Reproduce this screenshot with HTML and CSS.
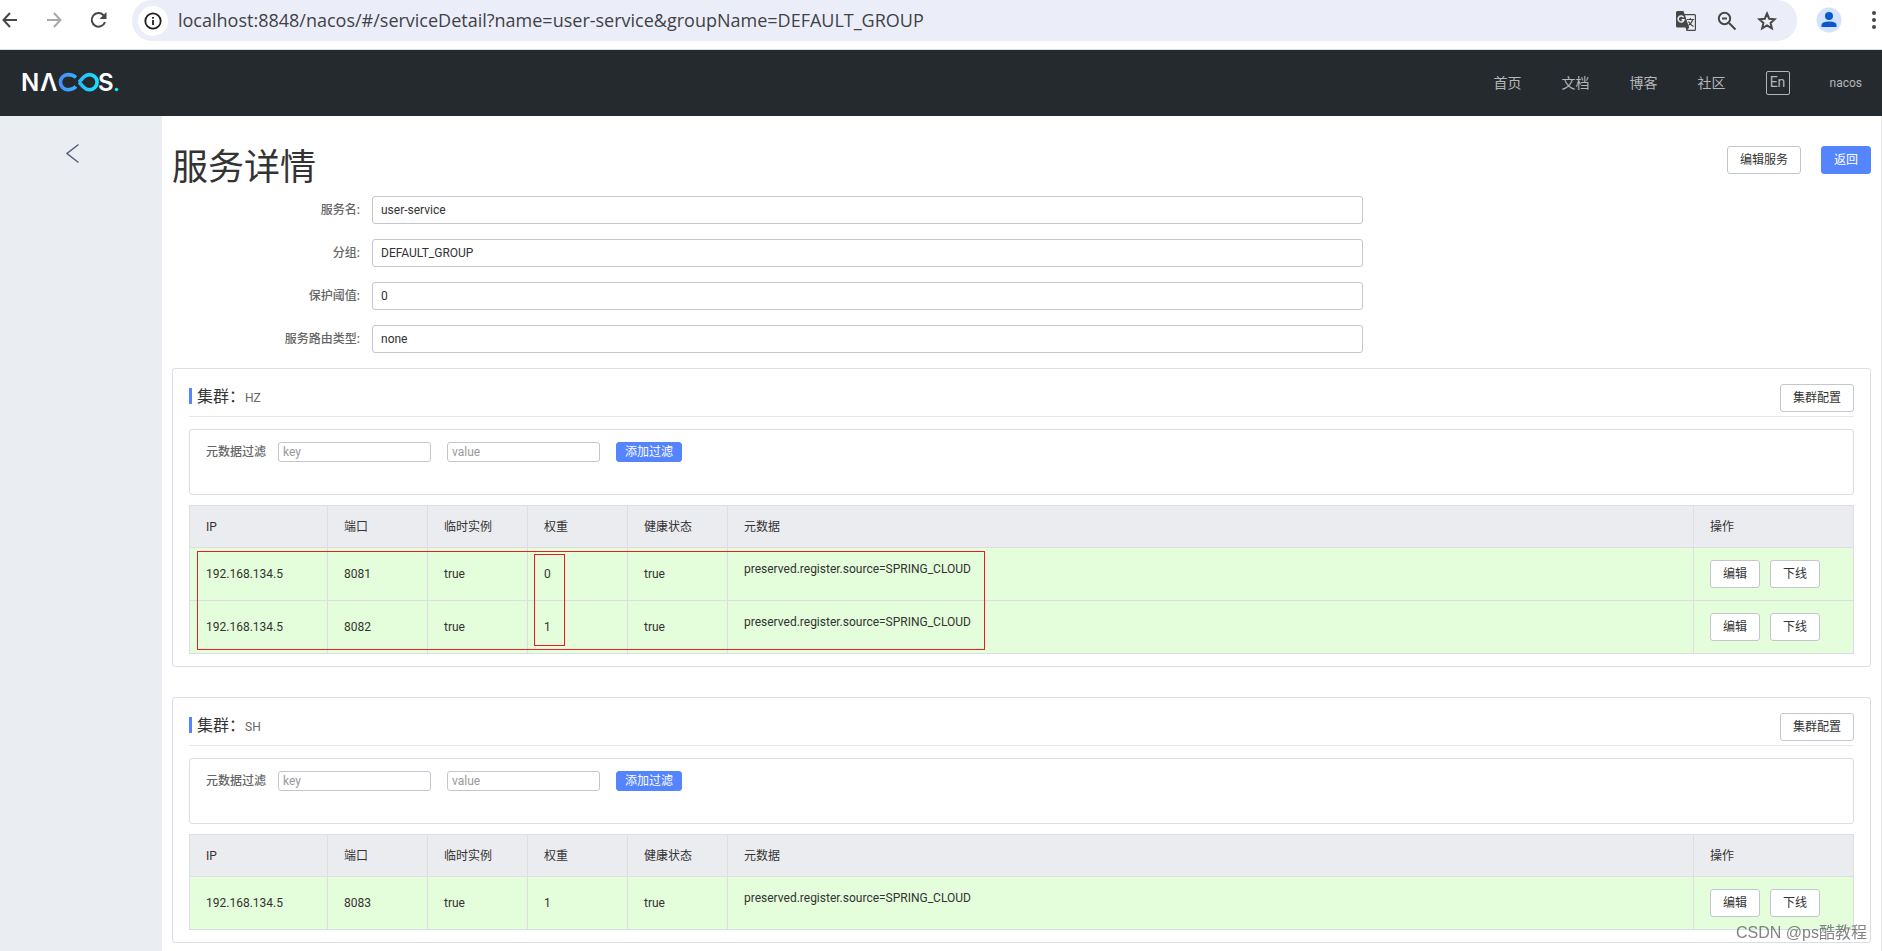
FILE: index.html
```html
<!DOCTYPE html>
<html lang="zh-CN">
<head>
<meta charset="utf-8">
<title>服务详情</title>
<link rel="stylesheet" href="styles.css">
</head>
<body>
<div class="toolbar">
  <button class="tool" type="button" aria-label="Back"><svg width="20" height="20" viewBox="0 0 20 20"><path class="ln" d="M17 10H4M10 3L3.500 10L10 17"/></svg></button>
  <button class="tool off" type="button" aria-label="Forward"><svg width="20" height="20" viewBox="0 0 20 20"><path class="ln" d="M3 10H16M10 3L16.500 10L10 17"/></svg></button>
  <button class="tool" type="button" aria-label="Reload"><svg width="20" height="20" viewBox="0 0 20 20"><path class="ln" d="M17 12A6.800 6.800 0 1 1 15.500 5.200L17 7"/><path fill="currentColor" d="M18.500 2V9H11.500Z"/></svg></button>
  <div class="omnibox">
    <button class="info" type="button" aria-label="Site information"><svg width="18" height="18" viewBox="0 0 18 18"><circle cx="9" cy="9" r="7.700" fill="none" stroke="currentColor" stroke-width="1.800"/><path fill="currentColor" d="M8.100 8h1.800v5H8.100zM8.100 5h1.800v1.800H8.100z"/></svg></button>
    <input class="url" type="text" aria-label="Address" value="localhost:8848/nacos/#/serviceDetail?name=user-service&amp;groupName=DEFAULT_GROUP">
    <button class="tool" type="button" aria-label="Translate"><svg width="22" height="22" viewBox="0 0 22 22"><path fill="currentColor" d="M2.500 1H8.500L9.500 4H19.500Q21 4 21 5.500V19.500Q21 21 19.500 21H11.500L10.500 17.500H2.500Q1 17.500 1 16V2.500Q1 1 2.500 1Z"/><path fill="#ebeef8" d="M10 5.200H19.800V19.800H12.500L14.200 17.500Z"/><path fill="none" stroke="#ebeef8" stroke-width="1.500" d="M8.600 7.300A3 3 0 1 0 9 9.700H6.500"/><path fill="none" stroke="currentColor" stroke-width="1.200" d="M12 9.500H19M15.300 8V9.500M17.800 9.500Q17 13 13.500 15.500M13.500 11.500Q15 14.500 18.500 16.500"/></svg></button>
    <button class="tool" type="button" aria-label="Zoom"><svg width="20" height="20" viewBox="0 0 20 20"><circle class="ln" cx="7.500" cy="7.500" r="5.700"/><path class="ln" d="M12 12L18.500 18.500M5 7.500H10"/></svg></button>
    <button class="tool" type="button" aria-label="Bookmark"><svg width="20" height="20" viewBox="0 0 20 20"><path fill="none" stroke="currentColor" stroke-width="2" d="M10 2.500L12.200 7.700L17.800 8.200L13.600 11.900L14.900 17.400L10 14.500L5.100 17.400L6.400 11.900L2.200 8.200L7.800 7.700Z"/></svg></button>
  </div>
  <button class="avatar" type="button" aria-label="Profile"><svg width="26" height="26" viewBox="0 0 26 26"><circle cx="13" cy="13" r="12.500" fill="#d3e3fd"/><circle cx="13" cy="9" r="4" fill="#0b57d0"/><path fill="#0b57d0" d="M5.500 20V18.200Q5.500 14.500 13 14.500T20.500 18.200V20Z"/></svg></button>
  <button class="more" type="button" aria-label="Menu"><svg width="8" height="20" viewBox="0 0 8 20"><g fill="#474747"><circle cx="4" cy="3" r="2"/><circle cx="4" cy="10" r="2"/><circle cx="4" cy="17" r="2"/></g></svg></button>
</div>

<header class="nav">
  <a class="logo" href="#" aria-label="NACOS">
    <svg width="102" height="36" viewBox="-2 -7 102 36">
      <defs><linearGradient id="g" gradientUnits="userSpaceOnUse" x1="37" y1="0" x2="77" y2="0"><stop offset="0" stop-color="#4a8bff"/><stop offset="1" stop-color="#12e6fa"/></linearGradient></defs>
      <g class="logo-text"><text x="-1" y="19">N</text><text x="18" y="19">Λ</text><text x="76" y="19">S</text></g>
      <path fill="none" stroke="url(#g)" stroke-width="3.600" d="M54 5.500C51.500 3.200 49 2.600 46 2.600A7.600 7.600 0 0 0 46 17.800C49 17.800 51.500 17 54 14.500M57 10.300L61.500 5.300C63.500 3.400 65.500 2.600 67.500 2.600A7.600 7.600 0 0 1 67.500 17.800C65.500 17.800 63.500 17 61.500 15L57 10.300"/>
      <circle cx="94.500" cy="17.500" r="1.800" fill="#12e6fa"/>
    </svg>
  </a>
  <nav class="links">
    <a href="#">首页</a>
    <a href="#">文档</a>
    <a href="#">博客</a>
    <a href="#">社区</a>
    <button class="lang" type="button">En</button>
    <a class="user" href="#">nacos</a>
  </nav>
</header>

<div class="page">
  <aside class="side">
    <button class="collapse" type="button" aria-label="返回上一页"><svg width="14" height="22" viewBox="0 0 14 22"><path fill="none" stroke="#546478" stroke-width="1.500" d="M12.500 1.500L1 10.500L12.500 19.500"/></svg></button>
  </aside>
  <main class="main">
    <div class="head">
      <h1>服务详情</h1>
      <div class="head-actions">
        <button class="btn" type="button">编辑服务</button>
        <button class="btn primary" type="button">返回</button>
      </div>
    </div>

    <form class="form">
      <label for="f-name">服务名:</label><input id="f-name" type="text" value="user-service" readonly>
      <label for="f-group">分组:</label><input id="f-group" type="text" value="DEFAULT_GROUP" readonly>
      <label for="f-threshold">保护阈值:</label><input id="f-threshold" type="text" value="0" readonly>
      <label for="f-route">服务路由类型:</label><input id="f-route" type="text" value="none" readonly>
    </form>

    <section class="card">
      <div class="card-head">
        <h2>集群：<small>HZ</small></h2>
        <button class="btn" type="button">集群配置</button>
      </div>
      <div class="filter">
        <label for="k1">元数据过滤</label>
        <input id="k1" type="text" placeholder="key">
        <input type="text" placeholder="value" aria-label="value">
        <button class="btn primary small" type="button">添加过滤</button>
      </div>
      <div class="table-wrap">
        <table>
          <thead><tr><th class="c-ip">IP</th><th class="c-s">端口</th><th class="c-s">临时实例</th><th class="c-s">权重</th><th class="c-s">健康状态</th><th>元数据</th><th class="c-op">操作</th></tr></thead>
          <tbody>
            <tr><td>192.168.134.5</td><td>8081</td><td>true</td><td>0</td><td>true</td><td><p class="meta">preserved.register.source=SPRING_CLOUD</p></td><td><div class="ops"><button class="btn" type="button">编辑</button><button class="btn" type="button">下线</button></div></td></tr>
            <tr><td>192.168.134.5</td><td>8082</td><td>true</td><td>1</td><td>true</td><td><p class="meta">preserved.register.source=SPRING_CLOUD</p></td><td><div class="ops"><button class="btn" type="button">编辑</button><button class="btn" type="button">下线</button></div></td></tr>
          </tbody>
        </table>
        <div class="mark mark-rows"></div>
        <div class="mark mark-weight"></div>
      </div>
    </section>

    <section class="card">
      <div class="card-head">
        <h2>集群：<small>SH</small></h2>
        <button class="btn" type="button">集群配置</button>
      </div>
      <div class="filter">
        <label for="k2">元数据过滤</label>
        <input id="k2" type="text" placeholder="key">
        <input type="text" placeholder="value" aria-label="value">
        <button class="btn primary small" type="button">添加过滤</button>
      </div>
      <div class="table-wrap">
        <table>
          <thead><tr><th class="c-ip">IP</th><th class="c-s">端口</th><th class="c-s">临时实例</th><th class="c-s">权重</th><th class="c-s">健康状态</th><th>元数据</th><th class="c-op">操作</th></tr></thead>
          <tbody>
            <tr><td>192.168.134.5</td><td>8083</td><td>true</td><td>1</td><td>true</td><td><p class="meta">preserved.register.source=SPRING_CLOUD</p></td><td><div class="ops"><button class="btn" type="button">编辑</button><button class="btn" type="button">下线</button></div></td></tr>
          </tbody>
        </table>
      </div>
    </section>
  </main>
</div>
<div class="watermark">CSDN @ps酷教程</div>
</body>
</html>
```
FILE: styles.css
```css
* { box-sizing: border-box; }

body {
  margin: 0;
  min-height: 100vh;
  display: flex;
  flex-direction: column;
  background: #fff;
  color: #333;
  font: 12px/18px Roboto, "Noto Sans CJK SC", sans-serif;
}

button, input { font: inherit; color: inherit; margin: 0; }
button { cursor: pointer; }
h1, h2, p { margin: 0; font-weight: 400; }
a { color: inherit; text-decoration: none; }
svg { display: block; }

/* Browser toolbar */
.toolbar {
  display: flex;
  align-items: flex-start;
  gap: 24px;
  height: 50px;
  padding-right: 4px;
  border-bottom: 1px solid #dadce0;
}
.tool, .info, .avatar, .more, .collapse {
  padding: 0;
  border: 0;
  background: none;
}
.tool { color: #474747; }
.tool.off { color: #a8a8a8; }
.toolbar > .tool { margin-top: 10px; }
.ln { fill: none; stroke: currentColor; stroke-width: 2; }
.omnibox {
  flex: 1;
  display: flex;
  align-items: center;
  gap: 20px;
  height: 41px;
  padding: 0 20px 0 6px;
  border-radius: 20px;
  background: #ebeef8;
}
.info {
  display: grid;
  place-items: center;
  width: 30px;
  height: 30px;
  border-radius: 50%;
  background: #fff;
  color: #1f1f1f;
}
.url {
  flex: 1;
  margin-left: -10px;
  padding: 0 0 2px;
  border: 0;
  outline: 0;
  background: none;
  color: #3f4247;
  font: 18px/28px "Open Sans", sans-serif;
}
.avatar { margin: 7px 4px 0 -5px; }
.more { margin-top: 10px; }

/* Site header */
.nav {
  display: flex;
  align-items: center;
  justify-content: space-between;
  height: 66px;
  padding: 0 20px 0 20px;
  background: #252a2f;
  color: #b4b6b8;
}
.logo-text {
  fill: #fff;
  font: 600 24px "Inter", sans-serif;
}
.links {
  display: flex;
  align-items: center;
  gap: 40px;
  font-size: 14px;
}
.lang {
  width: 24px;
  height: 24px;
  padding: 0 0 2px;
  border: 1px solid #b4b6b8;
  border-radius: 2px;
  background: none;
  font-size: 14px;
  line-height: 20px;
}
.user { font-size: 12px; }

/* Layout */
.page { flex: 1; display: flex; }
.side {
  width: 162px;
  padding: 27px 0 0 66px;
  background: #eaedf1;
}
.main {
  flex: 1;
  min-width: 0;
  padding: 30px 10px 4px;
  border-right: 1px solid #e8e8e8;
}
.head {
  display: flex;
  justify-content: space-between;
  margin-bottom: 6px;
}
.head h1 { font-size: 36px; line-height: 44px; }
.head-actions { display: flex; align-items: flex-start; gap: 20px; }

.btn {
  height: 28px;
  padding: 0 12px;
  border: 1px solid #c4c6cf;
  border-radius: 3px;
  background: #fff;
  color: #333;
  white-space: nowrap;
}
.btn.primary { border-color: #5584ff; background: #5584ff; color: #fff; }
.btn.small { height: 20px; padding: 0 8px; }

.form {
  display: grid;
  grid-template-columns: 188px calc(100% * 14 / 24);
  align-items: center;
  gap: 15px 12px;
  margin-bottom: 15px;
}
.form label { text-align: right; color: #666; font-weight: 500; }
.form input {
  height: 28px;
  padding: 0 8px;
  border: 1px solid #c4c6cf;
  border-radius: 3px;
  background: #fff;
}

/* Cluster cards */
.card {
  padding: 15px 16px 12px;
  border: 1px solid #dcdee3;
  border-radius: 3px;
}
.card + .card { margin-top: 30px; }
.card-head {
  display: flex;
  align-items: flex-start;
  justify-content: space-between;
  padding-bottom: 4px;
  border-bottom: 1px solid #e6e7eb;
}
.card h2 {
  display: flex;
  align-items: baseline;
  height: 16px;
  margin-top: 4px;
  padding-left: 5px;
  border-left: 3px solid #5584ff;
  font-size: 16px;
  line-height: 18px;
}
.card h2 small { font-size: 12px; color: #666; }
.filter {
  display: flex;
  align-items: flex-start;
  gap: 16px;
  height: 66px;
  margin: 12px 0 10px;
  padding: 12px 16px;
  border: 1px solid #dcdee3;
  border-radius: 3px;
}
.filter label { margin-right: -4px; line-height: 20px; color: #666; font-weight: 500; }
.filter input {
  width: 153px;
  height: 20px;
  padding: 0 4px;
  border: 1px solid #c4c6cf;
  border-radius: 3px;
}
.filter input::placeholder { color: #999; }

.table-wrap { position: relative; }
table {
  width: 100%;
  table-layout: fixed;
  border-collapse: separate;
  border-spacing: 0;
  border: 1px solid #dcdee3;
  border-width: 1px 0 0 1px;
}
th, td {
  padding: 0 16px;
  border: 1px solid #dcdee3;
  border-width: 0 1px 1px 0;
  text-align: left;
  font-weight: 400;
}
th { height: 42px; background: #ebecf0; }
td { height: 53px; background: #e4fdda; }
.c-ip { width: 138px; }
.c-s { width: 100px; }
.c-op { width: 160px; }
.meta { margin-bottom: 10px; }
.ops { display: flex; gap: 10px; }

.mark { position: absolute; border: 1px solid #ed1c24; pointer-events: none; }
.mark-rows { left: 8px; top: 46px; width: 788px; height: 99px; }
.mark-weight { left: 345px; top: 49px; width: 31px; height: 92px; }

.watermark {
  position: fixed;
  right: 15px;
  bottom: 6px;
  color: rgba(90, 90, 90, 0.75);
  font: 16px/24px "Liberation Sans", "Noto Sans CJK SC", sans-serif;
}
```
